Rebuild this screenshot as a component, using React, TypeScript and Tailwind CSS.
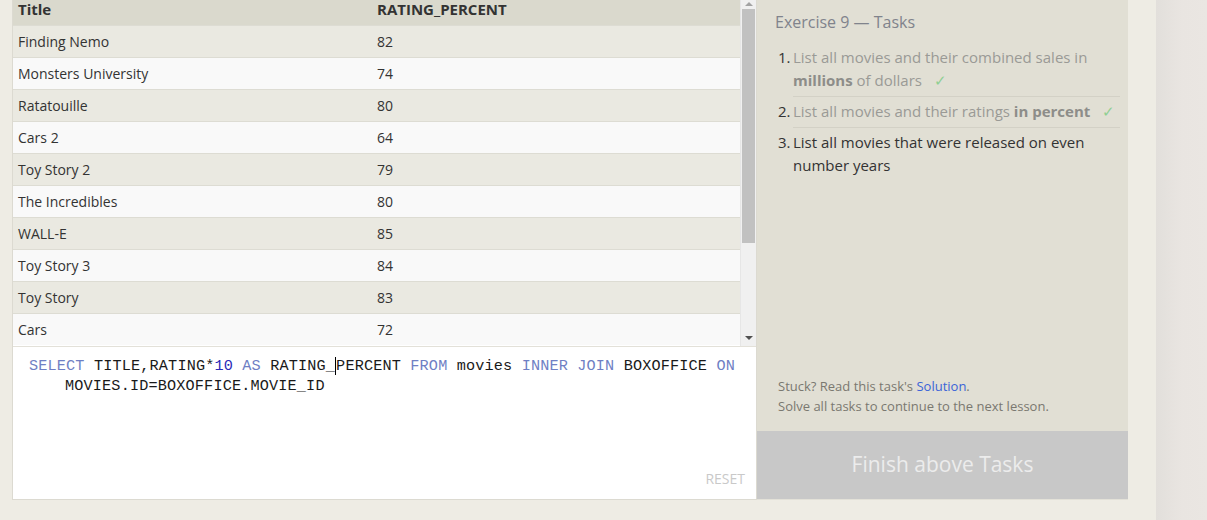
const rows: [string, number][] = [
  ["Finding Nemo", 82],
  ["Monsters University", 74],
  ["Ratatouille", 80],
  ["Cars 2", 64],
  ["Toy Story 2", 79],
  ["The Incredibles", 80],
  ["WALL-E", 85],
  ["Toy Story 3", 84],
  ["Toy Story", 83],
  ["Cars", 72],
];

const sans = { fontFamily: "'Open Sans', 'Noto Sans', sans-serif" };

function Check() {
  return <span className="ml-3 text-[#8fcf93]">✓</span>;
}

export default function App() {
  return (
    <div className="flex h-[520px] w-[1207px] overflow-hidden bg-[#eeece4]" style={sans}>
      <div className="flex w-[1156px] shrink-0 pl-[12px]">
        {/* left: results + editor */}
        <div className="flex h-[500px] w-[745px] flex-col border-x border-b border-[#dcdad1] bg-white">
          <div className="flex h-[346px] overflow-hidden">
            <div className="flex-1 overflow-hidden">
              <div className="grid h-[25px] grid-cols-[359px_1fr] bg-[#dad9cd] text-[15px] font-bold leading-[19px] text-[#333]">
                <div className="pl-[5px]">Title</div>
                <div className="pl-[5px]">RATING_PERCENT</div>
              </div>
              {rows.map(([t, r], i) => (
                <div
                  key={t}
                  className={
                    "grid h-[32px] grid-cols-[359px_1fr] items-center border-t border-[#dddcd3] text-[14px] text-[#333] " +
                    (i % 2 === 0 ? "bg-[#eae9e1]" : "bg-[#f9f9f9]")
                  }
                >
                  <div className="pl-[5px]">{t}</div>
                  <div className="pl-[5px]">{r}</div>
                </div>
              ))}
            </div>
            {/* scrollbar */}
            <div className="flex w-[16px] flex-col items-center border-l border-[#e6e6e6] bg-[#f0f0f0]">
              <div className="mt-[2px] h-0 w-0 border-x-[4px] border-b-[4px] border-x-transparent border-b-[#a3a3a3]" />
              <div className="mt-[3px] h-[234px] w-[13px] bg-[#c1c1c1]" />
              <div className="flex-1" />
              <div className="mb-[6px] h-0 w-0 border-x-[4px] border-t-[4px] border-x-transparent border-t-[#505050]" />
            </div>
          </div>
          {/* editor */}
          <div className="relative flex-1 border-t border-[#e3e1d9] pl-[16px] pt-[9px]">
            <div
              className="w-[716px] pl-[36px] -indent-[36px] text-[15.2px] leading-[20px] tracking-[0.16px] text-[#1a1a1a]"
              style={{ fontFamily: "'Liberation Mono', 'DejaVu Sans Mono', monospace" }}
            >
              <span className="text-[#6f7fc4]">SELECT</span> TITLE,RATING*<span className="text-[#2a2ab8]">10</span>{" "}
              <span className="text-[#6f7fc4]">AS</span> RATING_<span className="border-l border-black" />PERCENT{" "}
              <span className="text-[#6f7fc4]">FROM</span> movies <span className="text-[#6f7fc4]">INNER</span>{" "}
              <span className="text-[#6f7fc4]">JOIN</span> BOXOFFICE <span className="text-[#6f7fc4]">ON</span>{" "}
              MOVIES.ID=BOXOFFICE.MOVIE_ID
            </div>
            <div className="absolute bottom-[10px] right-[11px] text-[14px] text-[#c9c9c9]">RESET</div>
          </div>
        </div>

        {/* right: tasks */}
        <div className="flex h-[500px] w-[371px] flex-col border-b border-[#e3e1d8]">
          <div className="flex flex-1 flex-col bg-[#e1dfd4] pl-[18px] pr-[8px]">
            <div className="mt-[11px] text-[16px] leading-[22px] text-[#80838c]">Exercise 9 — Tasks</div>
            <ol className="mt-[13px] text-[15px] leading-[23px]">
              <li className="flex">
                <span className="w-[18px] pl-[3px] text-[#333]">1.</span>
                <div className="flex-1 border-b border-[#d3d1c6] pb-[4px] text-[#9a9a96]">
                  List all movies and their combined sales in <b className="text-[#8d8d89]">millions</b> of dollars
                  <Check />
                </div>
              </li>
              <li className="mt-[3px] flex">
                <span className="w-[18px] pl-[3px] text-[#333]">2.</span>
                <div className="flex-1 border-b border-[#d3d1c6] pb-[4px] text-[#9a9a96]">
                  List all movies and their ratings <b className="text-[#8d8d89]">in percent</b>
                  <Check />
                </div>
              </li>
              <li className="mt-[3px] flex">
                <span className="w-[18px] pl-[3px] text-[#333]">3.</span>
                <div className="flex-1 pr-[30px] text-[#333]">List all movies that were released on even number years</div>
              </li>
            </ol>
            <div className="flex-1" />
            <div className="mb-[15px] pl-[3px] text-[13px] leading-[20px] text-[#7a7870]">
              <div>
                Stuck? Read this task's <span className="text-[#3a64d8]">Solution</span>.
              </div>
              <div>Solve all tasks to continue to the next lesson.</div>
            </div>
          </div>
          <div className="flex h-[68px] items-center justify-center bg-[#c8c8c8] text-[21px] text-[#ececec]">
            Finish above Tasks
          </div>
        </div>
      </div>
      <div className="flex-1 bg-gradient-to-r from-[#e2dfdb] via-[#e9e5e1] to-[#eae6e2]" />
    </div>
  );
}
